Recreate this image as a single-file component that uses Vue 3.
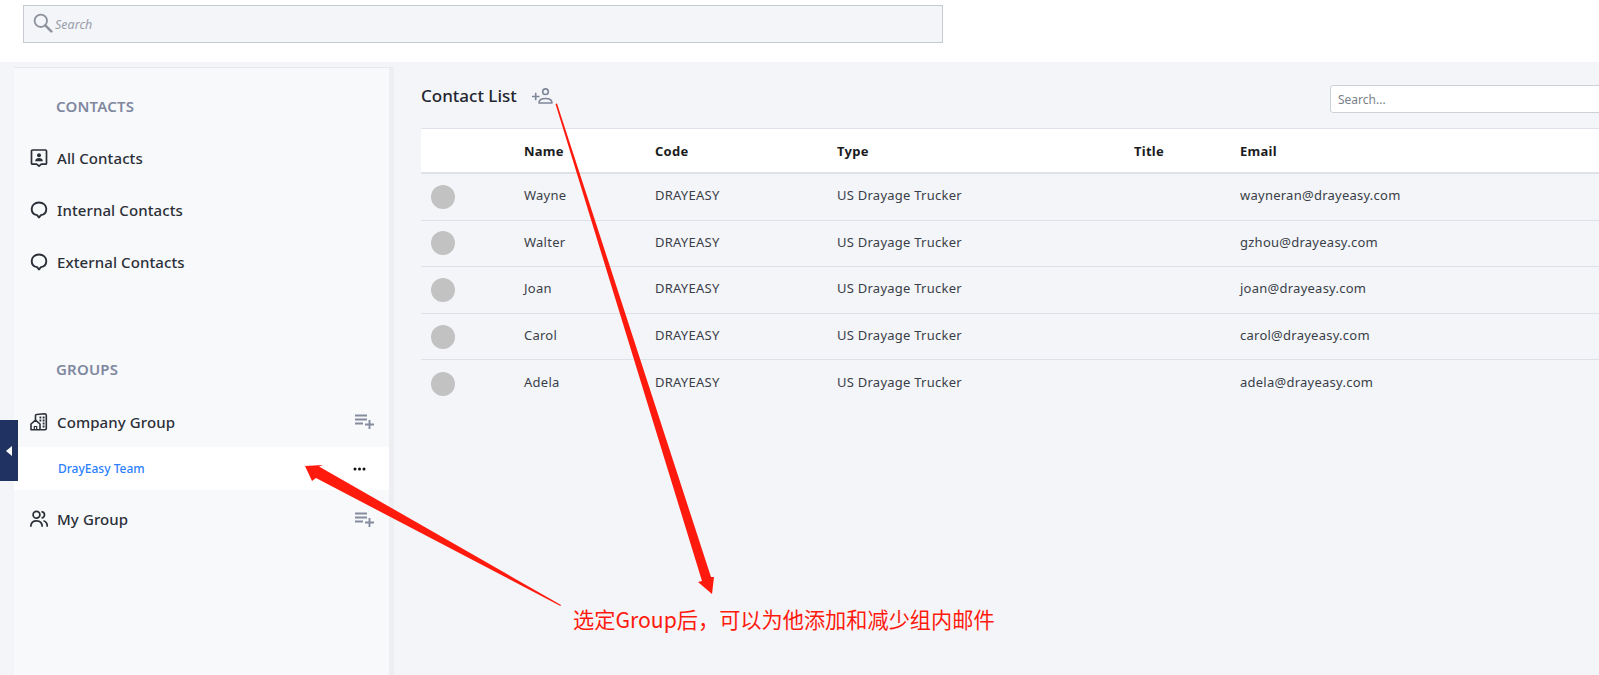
<script setup>
const rows = [
  { name: 'Wayne', email: 'wayneran@drayeasy.com' },
  { name: 'Walter', email: 'gzhou@drayeasy.com' },
  { name: 'Joan', email: 'joan@drayeasy.com' },
  { name: 'Carol', email: 'carol@drayeasy.com' },
  { name: 'Adela', email: 'adela@drayeasy.com' }
]
</script>

<template>
  <div class="page">
    <header class="topbar">
      <div class="global-search">
        <svg class="search-icon" width="20" height="20" viewBox="0 0 20 20" fill="none" stroke="#8f939e" stroke-width="1.9">
          <circle cx="7.8" cy="7.8" r="6.2" />
          <path d="M12.300 12.300 18.300 18.300" stroke-width="2.600" stroke-linecap="round" />
        </svg>
        <span>Search</span>
      </div>
    </header>

    <div class="body">
      <aside class="sidebar">
        <h3 class="section first">CONTACTS</h3>
        <div class="item">
          <svg class="ico" width="18" height="18" viewBox="0 0 18 18" fill="none" stroke="#2b2f38" stroke-width="1.700">
            <path d="M2.500 1h13a1 1 0 0 1 1 1v12.200a1 1 0 0 1-1 1h-4.200L9 17.200l-2.300-2H2.500a1 1 0 0 1-1-1V2a1 1 0 0 1 1-1z" stroke-linejoin="round" />
            <circle cx="9" cy="6.200" r="2" fill="#2b2f38" stroke="none" />
            <path d="M5.200 12.200c0-2.200 1.700-3.200 3.800-3.200s3.800 1 3.800 3.200z" fill="#2b2f38" stroke="none" />
          </svg>
          <span>All Contacts</span>
        </div>
        <div class="item">
          <svg class="ico" width="18" height="18" viewBox="0 0 18 18" fill="none" stroke="#2b2f38" stroke-width="1.900">
            <path d="M9 1.500c4.300 0 7.300 2.800 7.300 6.400 0 3.300-2.300 5.700-5.400 6.200L9 16.500l-1.900-2.400C4 13.600 1.700 11.200 1.700 7.900c0-3.600 3-6.400 7.300-6.400z" stroke-linejoin="round" />
          </svg>
          <span>Internal Contacts</span>
        </div>
        <div class="item">
          <svg class="ico" width="18" height="18" viewBox="0 0 18 18" fill="none" stroke="#2b2f38" stroke-width="1.900">
            <path d="M9 1.500c4.300 0 7.300 2.800 7.300 6.400 0 3.300-2.300 5.700-5.400 6.200L9 16.500l-1.900-2.400C4 13.600 1.700 11.200 1.700 7.900c0-3.600 3-6.400 7.300-6.400z" stroke-linejoin="round" />
          </svg>
          <span>External Contacts</span>
        </div>

        <h3 class="section groups">GROUPS</h3>
        <div class="item company">
          <svg class="ico" width="18" height="18" viewBox="0 0 18 18" fill="none" stroke="#2b2f38" stroke-width="1.600">
            <path d="M5.500 7V2.500Q5.500 1.500 6.500 1.500L14.500 .8Q16.300 .8 16.300 2.300V15.500Q16.300 16.800 15 16.800H10.500" stroke-linejoin="round" />
            <path d="M1 11 5.500 7.200 10 11v5.800H1z" stroke-linejoin="round" />
            <path d="M4.300 16.800v-3.300h2.400v3.300" stroke-width="1.200" />
            <path d="M9.500 4.500h1.800M12.700 4.500h1.800M9.500 7.500h1.800M12.700 7.500h1.800M12.700 10.500h1.800M12.700 13.500h1.800" stroke-width="1.800" />
          </svg>
          <span>Company Group</span>
          <svg class="listplus" width="19" height="15" viewBox="0 0 19 15" fill="none" stroke="#868c9f" stroke-width="1.900">
            <path d="M0 1.500h12M0 5.500h12M0 9.500h8M14.500 6v9M10 10.500h9" />
          </svg>
        </div>
        <div class="subitem">
          <span>DrayEasy Team</span>
          <svg class="dots" width="13" height="4" viewBox="0 0 13 4" fill="#111">
            <circle cx="2" cy="2" r="1.500" />
            <circle cx="6.500" cy="2" r="1.500" />
            <circle cx="11" cy="2" r="1.500" />
          </svg>
        </div>
        <div class="item mine">
          <svg class="ico" width="18" height="18" viewBox="0 0 18 18" fill="none" stroke="#2b2f38" stroke-width="1.700">
            <circle cx="6.500" cy="4.800" r="3.400" />
            <path d="M.8 16.800c0-4 2.300-6 5.700-6s5.700 2 5.700 6" />
            <path d="M11.500 1.600c1.800.2 3 1.500 3 3.200s-1.200 3-3 3.200M13.500 10.800c2.400.6 3.800 2.900 3.800 6" />
          </svg>
          <span>My Group</span>
          <svg class="listplus" width="19" height="15" viewBox="0 0 19 15" fill="none" stroke="#868c9f" stroke-width="1.900">
            <path d="M0 1.500h12M0 5.500h12M0 9.500h8M14.500 6v9M10 10.500h9" />
          </svg>
        </div>
      </aside>

      <main class="main">
        <div class="head">
          <h2>Contact List</h2>
          <svg class="add" width="21" height="16" viewBox="0 0 21 16" fill="none" stroke="#7f8699" stroke-width="1.600">
            <path d="M0 8.500h7.500M3.700 4.700v7.600" />
            <circle cx="13.500" cy="3.700" r="2.800" />
            <path d="M7 15c0-3.300 2.800-4.500 6.500-4.500s6.500 1.200 6.500 4.500z" stroke-linejoin="round" />
          </svg>
          <div class="list-search">Search...</div>
        </div>

        <div class="table">
          <div class="row header">
            <span></span>
            <span>Name</span>
            <span>Code</span>
            <span>Type</span>
            <span>Title</span>
            <span>Email</span>
          </div>
          <div v-for="r in rows" :key="r.name" class="row data">
            <i class="avatar"></i>
            <span>{{ r.name }}</span>
            <span>DRAYEASY</span>
            <span>US Drayage Trucker</span>
            <span></span>
            <span>{{ r.email }}</span>
          </div>
        </div>
      </main>
    </div>

    <button class="collapse" type="button" aria-label="Collapse">
      <svg width="6" height="10" viewBox="0 0 6 10" fill="#fff"><path d="M6 0v10L0 5z" /></svg>
    </button>

    <svg class="marks" width="1599" height="675" viewBox="0 0 1599 675" fill="#ff1a0e">
      <path d="M555.500 104 557 103.500 711 577 714 577 712 594 698 582 702 581z" />
      <path d="M305 466 323 465 319 466.500 561 605 560.500 606 316 478 312 481z" />
    </svg>
    <div class="note">选定Group后，可以为他添加和减少组内邮件</div>
  </div>
</template>

<style scoped>
.page {
  position: relative;
  display: flex;
  flex-direction: column;
  width: 1599px;
  height: 675px;
  overflow: hidden;
  background: #f3f5f9;
  font-family: "Noto Sans", "Open Sans", sans-serif;
  color: #2b2f38;
}
.topbar {
  flex: none;
  height: 62px;
  padding: 5px 0 0 23px;
  box-sizing: border-box;
  background: #fff;
}
.global-search {
  display: flex;
  align-items: center;
  gap: 2px;
  width: 920px;
  height: 38px;
  box-sizing: border-box;
  padding: 0 0 0 9px;
  background: #f3f5f9;
  border: 1px solid #c8cad3;
  color: #9a9ea9;
  font-size: 12.500px;
  font-style: italic;
}
.search-icon { margin-top: -3px; }

.body {
  flex: 1;
  display: flex;
  min-height: 0;
  padding-left: 14px;
}
.sidebar {
  flex: none;
  width: 380px;
  margin-top: 5px;
  box-sizing: border-box;
  background: #f8f9fb;
  border-top: 1px solid #e8e9ee;
  border-right: 5px solid #eceef1;
}
.section {
  margin: 0;
  height: 30px;
  padding-left: 42px;
  font-size: 15px;
  font-weight: 600;
  letter-spacing: .2px;
  line-height: 30px;
  color: #8088a0;
}
.section.first { margin: 23px 0 11px; }
.section.groups { margin: 66px 0 12px; }
.item {
  display: flex;
  align-items: center;
  height: 52px;
  padding: 0 15px 0 16px;
  font-size: 15px;
  font-weight: 500;
  letter-spacing: .1px;
}
.item.company { height: 51px; }
.item.mine { margin-top: 3px; }
.ico { flex: none; margin-right: 9px; }
.listplus { margin-left: auto; }
.subitem {
  display: flex;
  align-items: center;
  justify-content: space-between;
  height: 43px;
  padding: 0 23px 0 44px;
  background: #fff;
  color: #2b7fff;
  font-size: 12px;
  font-weight: 500;
}

.main {
  flex: 1;
  min-width: 0;
  padding: 23px 0 0 27px;
}
.head {
  display: flex;
  align-items: flex-start;
  height: 28px;
  margin-bottom: 15px;
}
.head h2 {
  margin: -2px 0 0;
  font-size: 17px;
  font-weight: 500;
  line-height: 26px;
  color: #23262e;
}
.add { margin: 3px 0 0 15px; }
.list-search {
  flex: none;
  width: 300px;
  height: 28px;
  margin-left: auto;
  margin-right: -31px;
  box-sizing: border-box;
  padding-left: 7px;
  background: #fff;
  border: 1px solid #cfd1d9;
  border-radius: 3px;
  color: #7a7f8a;
  font-size: 12px;
  line-height: 28px;
}
.table { font-size: 13px; letter-spacing: .25px; }
.row {
  display: grid;
  grid-template-columns: 103px 131px 182px 297px 106px 1fr;
  align-items: center;
  height: 46.600px;
  box-sizing: border-box;
  border-bottom: 1px solid #dfe1e8;
  color: #3a3e48;
}
.row:last-child { border-bottom: 0; }
.row.data span { margin-top: -3px; }
.row.header {
  height: 46px;
  background: #fff;
  border-top: 1px solid #dfe1e8;
  border-bottom: 2px solid #dfe1e8;
  color: #1a1c22;
  font-weight: 700;
}
.avatar {
  display: block;
  width: 24px;
  height: 24px;
  margin-left: 10px;
  border-radius: 50%;
  background: #c2c2c2;
}

.collapse {
  position: absolute;
  left: 0;
  top: 420px;
  width: 18px;
  height: 61px;
  padding: 0;
  border: 0;
  background: #1f3262;
  display: flex;
  align-items: center;
  justify-content: center;
}
.marks {
  position: absolute;
  left: 0;
  top: 0;
  pointer-events: none;
}
.note {
  position: absolute;
  left: 573px;
  top: 604px;
  color: #ff1a0e;
  font-family: "Noto Sans CJK SC", "Liberation Sans", sans-serif;
  font-size: 21.200px;
  line-height: 30px;
  white-space: nowrap;
}
</style>
